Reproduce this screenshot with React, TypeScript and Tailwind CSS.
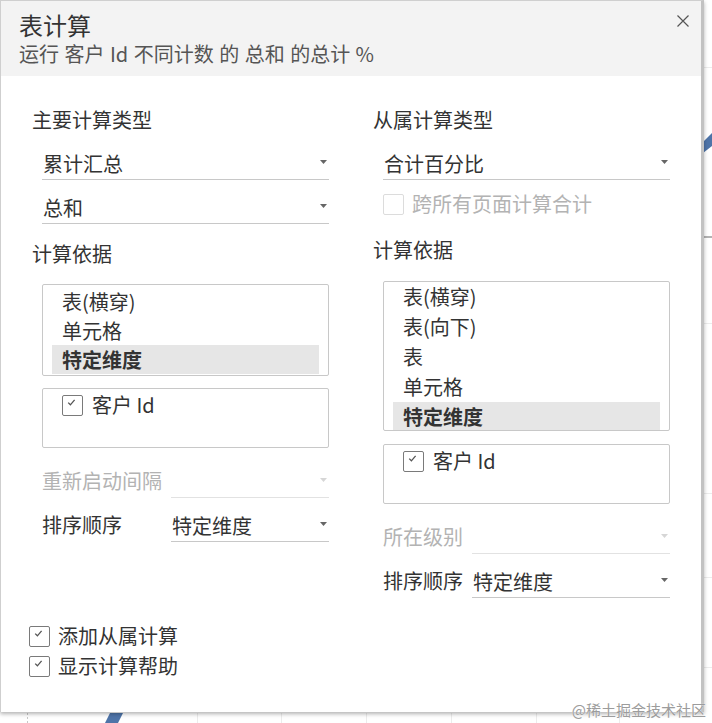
import React from "react";

const FONT = '"Noto Sans CJK SC", "Microsoft YaHei", sans-serif';

function Arrow({ disabled }: { disabled?: boolean }) {
  return (
    <svg width="7" height="4" viewBox="0 0 7 4" className="mb-[3px] shrink-0">
      <path d="M0 0 L7 0 L3.5 4 Z" fill={disabled ? "#d6d6d6" : "#666666"} />
    </svg>
  );
}

function Dropdown({ value, disabled }: { value?: string; disabled?: boolean }) {
  return (
    <div
      className={`flex h-[32px] min-w-0 flex-1 items-center justify-between border-b pl-[1px] pr-[2px] ${
        disabled ? "border-[#e2e2e2]" : "border-[#c8c8c8]"
      }`}
    >
      <span className="text-[20px] leading-[30px] text-[#333]">{value ?? ""}</span>
      <Arrow disabled={disabled} />
    </div>
  );
}

function Check({ checked, disabled }: { checked?: boolean; disabled?: boolean }) {
  return (
    <span
      className={`flex h-[21px] w-[21px] shrink-0 items-start justify-center rounded-[2px] border bg-white ${
        disabled ? "border-[#dcdcdc]" : "border-[#7a7a7a]"
      }`}
    >
      {checked && (
        <svg width="9" height="7" viewBox="0 0 9 7" className="mr-[2px] mt-[3px]">
          <path d="M1.2 3.6 L3.4 5.8 L7.6 0.8" stroke="#555" strokeWidth="1.3" fill="none" />
        </svg>
      )}
    </span>
  );
}

function Label({ children }: { children: React.ReactNode }) {
  return <div className="h-[30px] text-[20px] leading-[30px] text-[#333]">{children}</div>;
}

function ListBox({
  items,
  selected,
  height,
  rowH,
  pt,
}: {
  items: string[];
  selected: string;
  height: string;
  rowH: string;
  pt: string;
}) {
  return (
    <div className={`${height} ${pt} overflow-hidden rounded-[2px] border border-[#c8c8c8] px-[9px]`}>
      {items.map((it) => (
        <div
          key={it}
          className={`${rowH} shrink-0 pl-[10px] text-[20px] ${
            it === selected ? "bg-[#e6e6e6] font-bold text-[#333]" : "text-[#333]"
          }`}
        >
          {it}
        </div>
      ))}
    </div>
  );
}

function FieldBox() {
  return (
    <div className="h-[60px] rounded-[2px] border border-[#c8c8c8] pl-[19px] pt-[1px]">
      <div className="flex h-[30px] items-center gap-[9px]">
        <Check checked />
        <span className="text-[20px] leading-[30px] text-[#333]">客户 Id</span>
      </div>
    </div>
  );
}

export default function App() {
  return (
    <div className="relative h-[723px] w-[712px] overflow-hidden bg-white" style={{ fontFamily: FONT }}>
      <svg className="absolute inset-0" width="712" height="723" viewBox="0 0 712 723">
        <g stroke="#ececec" strokeWidth="1">
          <line x1="704" y1="67.5" x2="712" y2="67.5" />
          <line x1="704" y1="323.5" x2="712" y2="323.5" />
          <line x1="704" y1="493.5" x2="712" y2="493.5" />
          <line x1="704" y1="577.5" x2="712" y2="577.5" />
          <line x1="704" y1="667.5" x2="712" y2="667.5" />
          <line x1="197.5" y1="713" x2="197.5" y2="723" />
          <line x1="281.5" y1="713" x2="281.5" y2="723" />
          <line x1="366.5" y1="713" x2="366.5" y2="723" />
          <line x1="451.5" y1="713" x2="451.5" y2="723" />
          <line x1="536.5" y1="713" x2="536.5" y2="723" />
          <line x1="619.5" y1="713" x2="619.5" y2="723" />
        </g>
        <line x1="27.5" y1="713" x2="27.5" y2="723" stroke="#c8c8c8" strokeDasharray="2 2" />
        <line x1="704" y1="237" x2="712" y2="237" stroke="#9a9a9a" strokeWidth="1.5" />
        <polygon points="703,142 712,133 712,146 703,153" fill="#4e74a8" />
        <polygon points="110,713 123,713 118,723 105,723" fill="#4e74a8" />
      </svg>

      <div className="relative flex h-[712px] w-[704px] flex-col border-l border-t border-r-[3px] border-l-[#cfcfcf] border-t-[#cfcfcf] border-r-[#c2c2c2] bg-white shadow-[0_2px_4px_rgba(0,0,0,0.3)]">
        {/* header */}
        <div className="flex h-[75px] shrink-0 items-start justify-between bg-[#f3f3f3] pl-[18px] pr-[12px] pt-[9px]">
          <div className="flex flex-col">
            <div className="h-[30px] text-[24px] leading-[30px] text-[#333]">表计算</div>
            <div className="mt-[1px] h-[26px] text-[20px] leading-[26px] text-[#555] [word-spacing:1px]">
              运行 客户 Id 不同计数 的 总和 的总计 %
            </div>
          </div>
          <svg width="12" height="12" viewBox="0 0 12 12" className="mt-[5px]">
            <path d="M0.5 0.5 L11.5 11.5 M11.5 0.5 L0.5 11.5" stroke="#555" strokeWidth="1.2" />
          </svg>
        </div>

        {/* body */}
        <div className="flex gap-[44px] pl-[31px] pt-[29px]">
          {/* left column */}
          <div className="flex w-[297px] flex-col">
            <Label>主要计算类型</Label>
            <div className="ml-[10px] mt-[13px] flex">
              <Dropdown value="累计汇总" />
            </div>
            <div className="ml-[10px] mt-[12px] flex">
              <Dropdown value="总和" />
            </div>
            <div className="mt-[15px]">
              <Label>计算依据</Label>
            </div>
            <div className="ml-[10px] mt-[15px]">
              <ListBox
                items={["表(横穿)", "单元格", "特定维度"]}
                selected="特定维度"
                height="h-[92px]"
                rowH="h-[29px] leading-[29px]"
                pt="pt-[2px]"
              />
            </div>
            <div className="ml-[10px] mt-[12px]">
              <FieldBox />
            </div>
            <div className="ml-[10px] mt-[18px] flex items-end">
              <span className="h-[32px] w-[129px] shrink-0 text-[20px] leading-[30px] text-[#b3b3b3]">重新启动间隔</span>
              <Dropdown disabled />
            </div>
            <div className="ml-[10px] mt-[12px] flex items-end">
              <span className="h-[32px] w-[129px] shrink-0 text-[20px] leading-[30px] text-[#333]">排序顺序</span>
              <Dropdown value="特定维度" />
            </div>
          </div>

          {/* right column */}
          <div className="flex w-[297px] flex-col">
            <Label>从属计算类型</Label>
            <div className="ml-[10px] mt-[13px] flex">
              <Dropdown value="合计百分比" />
            </div>
            <div className="ml-[10px] mt-[9px] flex h-[30px] items-center gap-[8px]">
              <Check disabled />
              <span className="text-[20px] leading-[30px] text-[#b3b3b3]">跨所有页面计算合计</span>
            </div>
            <div className="mt-[16px]">
              <Label>计算依据</Label>
            </div>
            <div className="ml-[10px] mt-[16px]">
              <ListBox
                items={["表(横穿)", "表(向下)", "表", "单元格", "特定维度"]}
                selected="特定维度"
                height="h-[150px]"
                rowH="h-[30px] leading-[30px]"
                pt="pt-0"
              />
            </div>
            <div className="ml-[10px] mt-[13px]">
              <FieldBox />
            </div>
            <div className="ml-[10px] mt-[18px] flex items-end">
              <span className="h-[32px] w-[89px] shrink-0 text-[20px] leading-[30px] text-[#b3b3b3]">所在级别</span>
              <Dropdown disabled />
            </div>
            <div className="ml-[10px] mt-[12px] flex items-end">
              <span className="h-[32px] w-[89px] shrink-0 text-[20px] leading-[30px] text-[#333]">排序顺序</span>
              <Dropdown value="特定维度" />
            </div>
          </div>
        </div>

        {/* bottom checkboxes */}
        <div className="mt-[23px] flex flex-col pl-[28px]">
          <div className="flex h-[30px] items-center gap-[8px]">
            <Check checked />
            <span className="text-[20px] leading-[30px] text-[#333]">添加从属计算</span>
          </div>
          <div className="flex h-[30px] items-center gap-[8px]">
            <Check checked />
            <span className="text-[20px] leading-[30px] text-[#333]">显示计算帮助</span>
          </div>
        </div>
      </div>

      <div className="absolute bottom-[4px] right-[6px] text-[15px] leading-[18px] text-[#9c9c9c] [text-shadow:0_0_1px_#fff]">
        @稀土掘金技术社区
      </div>
    </div>
  );
}
